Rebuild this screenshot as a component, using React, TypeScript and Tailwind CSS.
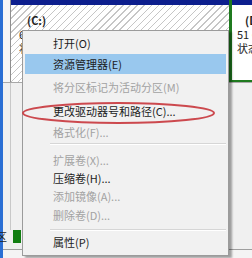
type MenuRow = {
  label?: string;
  h: string;
  active?: boolean;
  disabled?: boolean;
  sep?: string;
};

const rows: MenuRow[] = [
  { label: "打开(O)", h: "h-[21px]" },
  { label: "资源管理器(E)", h: "h-[20px]", active: true },
  { label: "将分区标记为活动分区(M)", h: "h-[26px]", disabled: true },
  { label: "更改驱动器号和路径(C)...", h: "h-[23px]" },
  { label: "格式化(F)...", h: "h-[19px]", disabled: true },
  { h: "h-[9px]", sep: "pt-[1px]" },
  { label: "扩展卷(X)...", h: "h-[18px]", disabled: true },
  { label: "压缩卷(H)...", h: "h-[18px]" },
  { label: "添加镜像(A)...", h: "h-[19px]", disabled: true },
  { label: "删除卷(D)...", h: "h-[18px]", disabled: true },
  { h: "h-[9px]", sep: "pt-[5px]" },
  { label: "属性(P)", h: "h-[18px]" },
];

function ContextMenu() {
  return (
    <div className="absolute left-[22px] top-[30px] z-10 h-[226px] w-[207px] border border-[#9b9b9b] bg-[#f1f1f1] px-[2px] pb-[4px] pt-[2px] shadow-[3px_2px_2px_rgba(0,0,0,0.35)]">
      {rows.map((row, i) =>
        row.sep ? (
          <div key={i} className={`${row.h} ${row.sep} pl-[25px]`}>
            <div className="h-[2px] border-t border-[#d6d6d6] bg-white" />
          </div>
        ) : (
          <div
            key={i}
            className={`flex items-center whitespace-nowrap pl-[28px] ${row.h} ${
              row.active ? "bg-[#99c8ee]" : ""
            } ${row.disabled ? "text-[#a2a2a2]" : "text-[#1c1c1c]"}`}
          >
            {row.label}
          </div>
        )
      )}
    </div>
  );
}

export default function App() {
  return (
    <div className="relative flex h-[258px] w-[252px] overflow-hidden bg-[#f0f0f0] font-['Noto_Sans_CJK_SC',sans-serif] text-[11px] text-[#1e1e1e]">
      <div className="w-[3px] shrink-0 bg-[#2b6fd4]" />
      <div className="flex min-w-0 flex-1 flex-col">
        <div className="flex h-[83px] shrink-0 border-b border-[#a8a8a8]">
          <div className="w-[7px] shrink-0 bg-[#f6f6f6]" />
          <div className="flex min-w-0 flex-1 flex-col border-l border-[#8f8f8f]">
            <div className="h-[5px] bg-[#0d1f8e]" />
            <div className="flex-1 overflow-hidden whitespace-nowrap bg-[repeating-linear-gradient(135deg,#ffffff_0px,#ffffff_4px,#c6c6c6_4px,#c6c6c6_5px)] pt-[8px] leading-[14px]">
              <div className="pl-[16px] font-bold">(C:)</div>
              <div className="pl-[8px]">61 GB NTFS</div>
              <div className="pl-[8px]">状态良好 (系统, 启动)</div>
            </div>
          </div>
          <div className="flex w-[23px] shrink-0 flex-col border-b-2 border-l-[3px] border-[#1f7a1f]">
            <div className="h-[5px] bg-[#0d1f8e]" />
            <div className="flex-1 overflow-hidden whitespace-nowrap bg-white pt-[8px] leading-[14px]">
              <div className="pl-[13px] font-bold">(D:)</div>
              <div className="pl-[5px]">51 GB NTFS</div>
              <div className="pl-[5px]">状态良好</div>
            </div>
          </div>
        </div>
        <div className="ml-[7px] flex-1 border-l border-[#c8c8c8]" />
        <div className="flex h-[13px] shrink-0 items-center">
          <span className="ml-[-7px] leading-none">区</span>
          <span className="ml-[6px] h-[13px] w-[8px] bg-[#117d11]" />
        </div>
        <div className="h-[6px] shrink-0" />
        <div className="h-px shrink-0 bg-[#9e9e9e]" />
        <div className="h-[8px] shrink-0 bg-[#f4f4f4]" />
      </div>
      <ContextMenu />
      <svg
        className="absolute left-[20px] top-[100px] z-20"
        width="200"
        height="27"
        viewBox="0 0 200 27"
      >
        <ellipse cx="98.5" cy="13" rx="95.5" ry="10" fill="none" stroke="#c8363c" strokeWidth="2" opacity="0.9" />
      </svg>
    </div>
  );
}
